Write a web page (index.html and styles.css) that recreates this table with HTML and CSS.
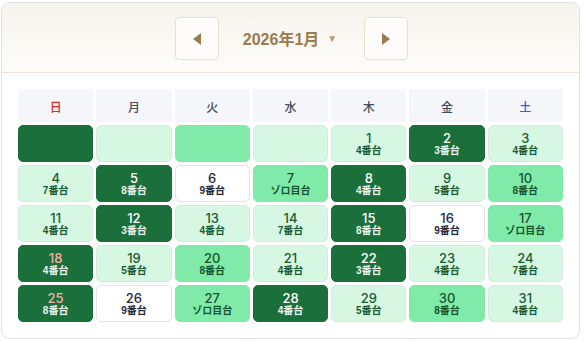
FILE: index.html
```html
<!DOCTYPE html>
<html lang="ja">
<head>
<meta charset="utf-8">
<title>2026年1月</title>
<link rel="stylesheet" href="styles.css">
</head>
<body>
<div class="card">
  <div class="cal-head">
    <button class="nav" aria-label="前の月">
      <svg width="10" height="14" viewBox="0 0 10 14"><polygon points="9,1 9,13 1,7" fill="#9b7a4c"/></svg>
    </button>
    <div class="title">2026年1月<span class="caret">▼</span></div>
    <button class="nav" aria-label="次の月">
      <svg width="10" height="14" viewBox="0 0 10 14"><polygon points="1,1 1,13 9,7" fill="#9b7a4c"/></svg>
    </button>
  </div>
  <div class="cal-body">
    <div class="grid">
      <div class="dow sun">日</div>
      <div class="dow">月</div>
      <div class="dow">火</div>
      <div class="dow">水</div>
      <div class="dow">木</div>
      <div class="dow">金</div>
      <div class="dow sat">土</div>

      <div class="day dark"></div>
      <div class="day light"></div>
      <div class="day mid"></div>
      <div class="day light"></div>
      <div class="day light"><span class="n">1</span><span class="l">4番台</span></div>
      <div class="day dark"><span class="n">2</span><span class="l">3番台</span></div>
      <div class="day light"><span class="n">3</span><span class="l">4番台</span></div>

      <div class="day light"><span class="n">4</span><span class="l">7番台</span></div>
      <div class="day dark"><span class="n">5</span><span class="l">8番台</span></div>
      <div class="day white"><span class="n">6</span><span class="l">9番台</span></div>
      <div class="day mid"><span class="n">7</span><span class="l">ゾロ目台</span></div>
      <div class="day dark"><span class="n">8</span><span class="l">4番台</span></div>
      <div class="day light"><span class="n">9</span><span class="l">5番台</span></div>
      <div class="day mid"><span class="n">10</span><span class="l">8番台</span></div>

      <div class="day light"><span class="n">11</span><span class="l">4番台</span></div>
      <div class="day dark"><span class="n">12</span><span class="l">3番台</span></div>
      <div class="day light"><span class="n">13</span><span class="l">4番台</span></div>
      <div class="day light"><span class="n">14</span><span class="l">7番台</span></div>
      <div class="day dark"><span class="n">15</span><span class="l">8番台</span></div>
      <div class="day white"><span class="n">16</span><span class="l">9番台</span></div>
      <div class="day mid"><span class="n">17</span><span class="l">ゾロ目台</span></div>

      <div class="day dark sunday"><span class="n">18</span><span class="l">4番台</span></div>
      <div class="day light"><span class="n">19</span><span class="l">5番台</span></div>
      <div class="day mid"><span class="n">20</span><span class="l">8番台</span></div>
      <div class="day light"><span class="n">21</span><span class="l">4番台</span></div>
      <div class="day dark"><span class="n">22</span><span class="l">3番台</span></div>
      <div class="day light"><span class="n">23</span><span class="l">4番台</span></div>
      <div class="day light"><span class="n">24</span><span class="l">7番台</span></div>

      <div class="day dark sunday"><span class="n">25</span><span class="l">8番台</span></div>
      <div class="day white"><span class="n">26</span><span class="l">9番台</span></div>
      <div class="day mid"><span class="n">27</span><span class="l">ゾロ目台</span></div>
      <div class="day dark"><span class="n">28</span><span class="l">4番台</span></div>
      <div class="day light"><span class="n">29</span><span class="l">5番台</span></div>
      <div class="day mid"><span class="n">30</span><span class="l">8番台</span></div>
      <div class="day light"><span class="n">31</span><span class="l">4番台</span></div>
    </div>
  </div>
</div>
</body>
</html>
```
FILE: styles.css
```css
html, body {
  margin: 0;
  padding: 0;
  background: #ffffff;
}
body {
  font-family: "Liberation Sans", "Noto Sans CJK JP", sans-serif;
  padding: 2px 0 0 1px;
}
.card {
  box-sizing: border-box;
  width: 579px;
  height: 337px;
  border: 1px solid #e1e1e8;
  border-radius: 8px;
  overflow: hidden;
  background: #ffffff;
}
.cal-head {
  box-sizing: border-box;
  height: 70px;
  border-bottom: 1px solid #ebe2d6;
  background: linear-gradient(#f7f4ee, #fdfcf9);
  display: flex;
  align-items: center;
  justify-content: center;
  padding-left: 2px;
}
.nav {
  box-sizing: border-box;
  width: 44px;
  height: 43px;
  border: 1px solid #eadfcd;
  border-radius: 4px;
  background: #fdfcfa;
  display: flex;
  align-items: center;
  justify-content: center;
  padding: 0;
  margin: 0;
  margin-top: 2px;
}
.title {
  margin: 0 27px 0 24px;
  font-family: "Liberation Sans", "Noto Sans CJK JP", sans-serif;
  font-size: 16px;
  font-weight: bold;
  color: #9b7a4c;
  display: flex;
  align-items: center;
  padding-top: 1px;
}
.caret {
  font-size: 10px;
  color: #b89c76;
  margin-left: 8px;
  font-weight: normal;
}
.cal-body {
  padding: 16px 16px 0 16px;
}
.grid {
  display: grid;
  grid-template-columns: repeat(7, 1fr);
  column-gap: 3px;
  row-gap: 3px;
  grid-template-rows: 33px;
  grid-auto-rows: 37px;
}
.dow {
  background: #f5f6f9;
  display: flex;
  align-items: center;
  justify-content: center;
  font-family: "Noto Sans CJK JP", sans-serif;
  font-size: 12px;
  font-weight: 500;
  color: #454c58;
  padding-top: 1px;
}
.grid .dow.sun { color: #dc2626; }
.grid .dow.sat { color: #2563eb; }
.day {
  box-sizing: border-box;
  border-radius: 5px;
  border: 1px solid transparent;
  display: flex;
  flex-direction: column;
  align-items: center;
  justify-content: center;
  line-height: 1;
}
.day .n {
  font-family: "Inter", "Liberation Sans", sans-serif;
  font-size: 13px;
  font-weight: 500;
}
.day .l {
  font-family: "Liberation Sans", "Noto Sans CJK JP", sans-serif;
  font-size: 10px;
  font-weight: bold;
  margin-top: 1px;
}
.day.dark {
  background: #1b6f3b;
  border-color: #1b6f3b;
  color: #ffffff;
}
.day.dark .l { color: #e8f3ec; }
.day.sunday .n { color: #f4b0a8; }
.day.light {
  background: #d6f8e3;
  border-color: #d9e9df;
  color: #1b5a34;
}
.day.mid {
  background: #80eba8;
  border-color: #80eba8;
  color: #165530;
}
.day.white {
  background: #ffffff;
  border-color: #e2e4e8;
  color: #1f2937;
}
```
